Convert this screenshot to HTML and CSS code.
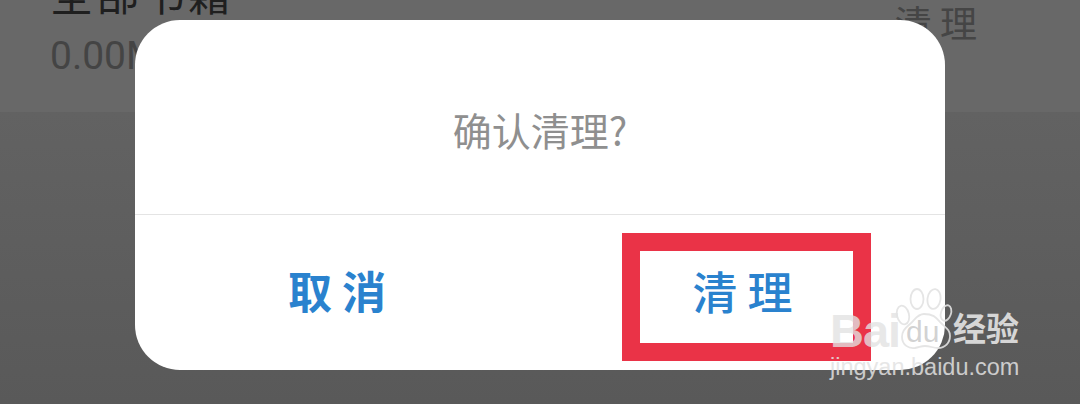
FILE: index.html
```html
<!DOCTYPE html>
<html lang="zh">
<head>
<meta charset="utf-8">
<title>确认清理</title>
<link rel="stylesheet" href="styles.css">
</head>
<body>
<div class="screen">
  <header class="row">
    <div class="row-info">
      <div class="row-title">全部书籍</div>
      <div class="row-size">0.00M</div>
    </div>
    <div class="row-action">清 理</div>
  </header>
  <div class="rest"></div>

  <section class="dialog">
    <div class="dialog-msg">确认清理?</div>
    <div class="dialog-actions">
      <div class="btn btn-cancel">取 消</div>
      <div class="btn btn-marked">清 理</div>
    </div>
  </section>

  <div class="mark">
    <span class="mark-bai">Bai</span>
    <svg class="mark-paw" viewBox="0 0 60 64" aria-hidden="true">
      <g class="paw-shapes">
        <ellipse cx="9" cy="27" rx="6" ry="9.5" transform="rotate(-14 9 27)"/>
        <ellipse cx="23" cy="11" rx="6.5" ry="10"/>
        <ellipse cx="40" cy="11" rx="6.5" ry="10" transform="rotate(8 40 11)"/>
        <ellipse cx="52" cy="25" rx="5" ry="8" transform="rotate(18 52 25)"/>
        <path d="M30 26c-7 0-9 6-14 10-6 5-8 8-8 13 0 8 7 12 13 11 5-1 6-2 10-2 5 0 8 2 13 2 7 0 12-5 12-12 0-6-4-8-9-13-4-4-6-9-17-9z"/>
      </g>
    </svg>
    <span class="mark-du">du</span>
    <span class="mark-cn">经验</span>
    <span class="mark-url">jingyan.baidu.com</span>
  </div>
</div>
</body>
</html>
```

FILE: styles.css
```css
* { box-sizing: border-box; }

html, body {
  margin: 0;
  padding: 0;
}

body {
  width: 1080px;
  height: 404px;
  overflow: hidden;
  font-family: "Noto Sans CJK SC", "Noto Sans", sans-serif;
}

.screen {
  position: relative;
  width: 1080px;
  height: 404px;
  display: flex;
  flex-direction: column;
  background: #5c5c5c;
  overflow: hidden;
}

.row {
  height: 112px;
  flex: none;
  display: flex;
  justify-content: space-between;
  padding: 0 103px 0 50px;
  background: #686868;
}

.row-info {
  display: flex;
  flex-direction: column;
  margin-top: -33px;
}

.row-title {
  font-size: 43px;
  line-height: 50px;
  letter-spacing: 3px;
  color: #1f1f1f;
  height: 50px;
}

.row-size {
  font-family: "Roboto", sans-serif;
  font-size: 39px;
  line-height: 46px;
  color: #444;
  margin-top: 16px;
}

.row-action {
  font-size: 37px;
  line-height: 44px;
  color: #454545;
}

.rest {
  flex: 1;
  background: linear-gradient(#626262, #595959);
}

.dialog {
  position: absolute;
  left: 135px;
  top: 20px;
  width: 810px;
  height: 350px;
  display: flex;
  flex-direction: column;
  background: #fff;
  border-radius: 45px;
}

.dialog-msg {
  height: 195px;
  flex: none;
  display: flex;
  align-items: center;
  justify-content: center;
  padding-top: 23px;
  border-bottom: 1px solid #e4e4e4;
  font-size: 39px;
  color: #8f8f8f;
}

.dialog-actions {
  flex: 1;
  display: flex;
  align-items: flex-start;
  padding: 18px 74px 0 153px;
  justify-content: space-between;
}

.btn {
  height: 128px;
  display: flex;
  align-items: center;
  justify-content: center;
  font-size: 44px;
  font-weight: 700;
  color: #2a82ce;
  padding-bottom: 14px;
}

.btn-marked {
  width: 249px;
  border: 18px solid #ea3347;
  font-weight: 500;
  font-size: 45px;
  padding-right: 8px;
}

.mark {
  position: absolute;
  left: 830px;
  top: 288px;
  width: 200px;
  height: 100px;
  color: rgba(226, 226, 226, .8);
}

.mark-bai {
  position: absolute;
  left: 0;
  top: 20px;
  font-family: "Liberation Sans", sans-serif;
  font-weight: 700;
  font-size: 47px;
  line-height: 46px;
  letter-spacing: -1px;
}

.mark-paw {
  position: absolute;
  left: 64px;
  top: 0;
  width: 60px;
  height: 64px;
}

.paw-shapes {
  fill: none;
  stroke: rgb(226, 226, 226);
  stroke-opacity: .9;
  stroke-width: 1.8;
}

.mark-du {
  position: absolute;
  left: 76px;
  top: 30px;
  font-family: "Liberation Sans", sans-serif;
  font-size: 30px;
  line-height: 28px;
  color: rgba(190, 190, 190, .7);
}

.mark-cn {
  position: absolute;
  left: 123px;
  top: 19px;
  font-size: 33px;
  line-height: 40px;
  font-weight: 700;
  color: #d6d6d6;
}

.mark-url {
  position: absolute;
  left: 0;
  top: 65px;
  font-family: "Liberation Sans", sans-serif;
  font-size: 23.5px;
  line-height: 28px;
  white-space: nowrap;
  color: rgba(226, 226, 226, .85);
}
```
